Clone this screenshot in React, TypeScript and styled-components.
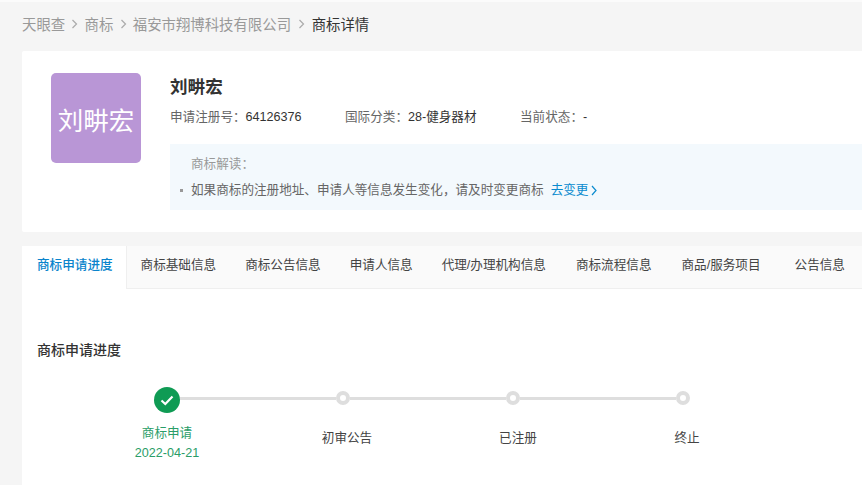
import React from "react";
import styled, { createGlobalStyle } from "styled-components";

const Global = createGlobalStyle`
  html, body { margin: 0; padding: 0; background: #f5f5f5; }
  body { font-family: "Liberation Sans", "Noto Sans CJK SC", sans-serif; overflow: hidden; }
  #root { width: 862px; height: 485px; overflow: hidden; }
  * { box-sizing: border-box; }
`;

const Page = styled.div`
  width: 900px;
  height: 485px;
  padding: 0 0 0 22px;
  border-top: 2px solid #fbfbfb;
  background: #f5f5f5;
  display: flex;
  flex-direction: column;
`;

const Crumbs = styled.nav`
  height: 49px;
  display: flex;
  align-items: center;
  padding-bottom: 6px;
  font-size: 14.4px;
  color: #999;
`;
const Crumb = styled.span<{ $current?: boolean }>`
  color: ${(p) => (p.$current ? "#333" : "#999")};
`;
const CrumbSep = styled.svg<{ $wide?: boolean }>`
  width: 7px;
  height: 10px;
  margin: 0 ${(p) => (p.$wide ? 6.8 : 6.2)}px;
  fill: none;
  stroke: #aaa;
  stroke-width: 1.2;
`;

const HeaderCard = styled.section`
  flex: none;
  height: 181px;
  background: #fff;
  border-radius: 2px 0 0 2px;
  padding: 22px 0 0 29px;
  display: flex;
  gap: 29px;
`;
const Logo = styled.div`
  flex: none;
  width: 90px;
  height: 90px;
  border-radius: 5px;
  background: #b996d6;
  color: #fff;
  font-size: 25.5px;
  display: flex;
  align-items: center;
  justify-content: center;
`;
const Info = styled.div`
  flex: 1;
  display: flex;
  flex-direction: column;
`;
const Name = styled.h1`
  margin: 0;
  height: 28px;
  line-height: 28px;
  font-size: 17.6px;
  font-weight: 700;
  color: #333;
`;
const Meta = styled.div`
  display: flex;
  margin-top: 6px;
  height: 20px;
  line-height: 20px;
  font-size: 12.6px;
  color: #333;
`;
const MetaItem = styled.div<{ $w: number }>`
  width: ${(p) => p.$w}px;
`;
const MetaLabel = styled.span`
  color: #666;
`;
const Notice = styled.div`
  margin-top: 17px;
  height: 66px;
  background: #f3f9fd;
  padding: 10px 0 0 10px;
  font-size: 12.6px;
  line-height: 20px;
`;
const NoticeTitle = styled.div`
  padding-left: 11px;
  color: #999;
  margin-bottom: 6px;
`;
const NoticeRow = styled.div`
  display: flex;
  align-items: center;
  color: #666;
`;
const Bullet = styled.i`
  width: 3px;
  height: 3px;
  background: #999;
  margin-right: 8px;
`;
const LinkText = styled.a`
  margin-left: 7px;
  color: #0a8bcf;
  display: inline-flex;
  align-items: center;
  gap: 3px;
`;
const LinkArrow = styled.svg`
  width: 6px;
  height: 11px;
  fill: none;
  stroke: #0a8bcf;
  stroke-width: 1.2;
`;

const DetailCard = styled.section`
  flex: 1;
  margin-top: 14px;
  background: #fff;
  display: flex;
  flex-direction: column;
`;
const Tabs = styled.div`
  height: 43px;
  background: #fafafa;
  border-bottom: 1px solid #efefef;
  display: flex;
  font-size: 12.6px;
`;
const Tab = styled.div<{ $active?: boolean; $ml?: number }>`
  height: ${(p) => (p.$active ? "43px" : "42px")};
  line-height: 39px;
  padding: ${(p) => (p.$active ? "0 13px 0 15px" : "0")};
  margin-left: ${(p) => p.$ml ?? 0}px;
  white-space: nowrap;
  color: ${(p) => (p.$active ? "#0a84cc" : "#444")};
  font-weight: ${(p) => (p.$active ? 500 : 400)};
  background: ${(p) => (p.$active ? "#fff" : "transparent")};
  border-right: ${(p) => (p.$active ? "1px solid #efefef" : "none")};
`;
const SectionTitle = styled.h2`
  margin: 51px 0 0 15px;
  height: 20px;
  line-height: 20px;
  font-size: 14px;
  font-weight: 500;
  color: #333;
`;
const Track = styled.div`
  display: flex;
  align-items: center;
  margin: 23px 0 0 132px;
`;
const DoneDot = styled.div`
  flex: none;
  width: 26px;
  height: 26px;
  margin-top: 4px;
  border-radius: 50%;
  background: #0f9b54;
  display: flex;
  align-items: center;
  justify-content: center;
`;
const Dot = styled.div`
  flex: none;
  width: 14px;
  height: 14px;
  border-radius: 50%;
  border: 4px solid #dedede;
  background: #fff;
`;
const Connector = styled.div`
  flex: none;
  width: 156px;
  height: 3px;
  background: #dedede;
`;
const Labels = styled.div`
  display: grid;
  grid-template-columns: 180px 180px 162px 176px;
  margin: 10px 0 0 55px;
  font-size: 12.6px;
  line-height: 20px;
  text-align: center;
  color: #444;
`;
const StepLabel = styled.div<{ $done?: boolean }>`
  color: ${(p) => (p.$done ? "#2a9d68" : "#444")};
  padding-top: ${(p) => (p.$done ? 0 : 5)}px;
`;

const COLON = "\uFF1A";
const COMMA = "\uFF0C";
const crumbs = ["天眼查", "商标", "福安市翔博科技有限公司"];
const tabs: [string, number][] = [
  ["商标基础信息", 14],
  ["商标公告信息", 29],
  ["申请人信息", 29],
  ["代理/办理机构信息", 29],
  ["商标流程信息", 30],
  ["商品/服务项目", 30],
  ["公告信息", 34],
];

export default function App() {
  return (
    <>
      <Global />
      <Page>
        <Crumbs>
          {crumbs.map((c, i) => (
            <React.Fragment key={c}>
              <Crumb>{c}</Crumb>
              <CrumbSep viewBox="0 0 7 10" $wide={i === 2}>
                <path d="M1.5 1l4 4-4 4" />
              </CrumbSep>
            </React.Fragment>
          ))}
          <Crumb $current>商标详情</Crumb>
        </Crumbs>
        <HeaderCard>
          <Logo>刘畊宏</Logo>
          <Info>
            <Name>刘畊宏</Name>
            <Meta>
              <MetaItem $w={175}><MetaLabel>申请注册号{COLON}</MetaLabel>64126376</MetaItem>
              <MetaItem $w={175}><MetaLabel>国际分类{COLON}</MetaLabel>28-健身器材</MetaItem>
              <MetaItem $w={120}><MetaLabel>当前状态{COLON}</MetaLabel>-</MetaItem>
            </Meta>
            <Notice>
              <NoticeTitle>商标解读{COLON}</NoticeTitle>
              <NoticeRow>
                <Bullet />
                如果商标的注册地址、申请人等信息发生变化{COMMA}请及时变更商标
                <LinkText>
                  去变更
                  <LinkArrow viewBox="0 0 6 11"><path d="M1 1l4 4.5-4 4.5" /></LinkArrow>
                </LinkText>
              </NoticeRow>
            </Notice>
          </Info>
        </HeaderCard>
        <DetailCard>
          <Tabs>
            <Tab $active>商标申请进度</Tab>
            {tabs.map(([t, ml]) => (
              <Tab key={t} $ml={ml}>{t}</Tab>
            ))}
          </Tabs>
          <SectionTitle>商标申请进度</SectionTitle>
          <Track>
            <DoneDot>
              <svg width="16" height="16" viewBox="0 0 16 16" fill="none" stroke="#fff" strokeWidth="2.2">
                <path d="M2.5 8.5l3.8 3.5 7.2-7.5" />
              </svg>
            </DoneDot>
            <Connector />
            <Dot />
            <Connector />
            <Dot />
            <Connector />
            <Dot />
          </Track>
          <Labels>
            <StepLabel $done>商标申请<br />2022-04-21</StepLabel>
            <StepLabel>初审公告</StepLabel>
            <StepLabel>已注册</StepLabel>
            <StepLabel>终止</StepLabel>
          </Labels>
        </DetailCard>
      </Page>
    </>
  );
}
